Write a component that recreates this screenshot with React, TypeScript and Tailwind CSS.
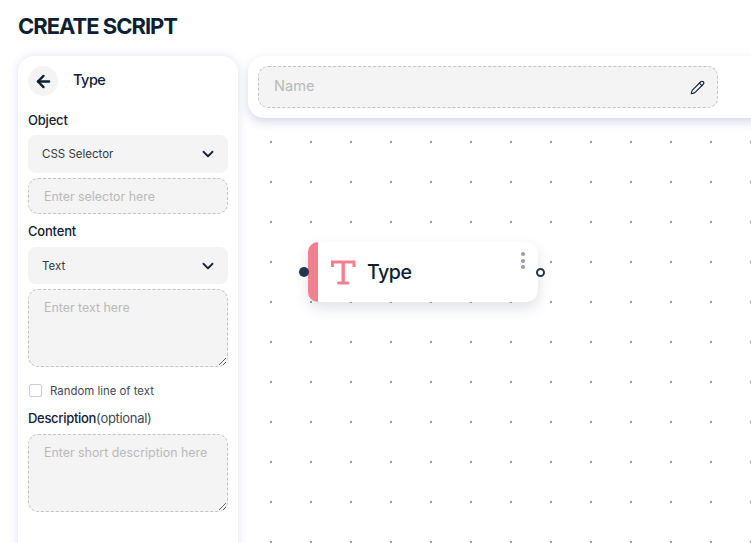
import { ArrowLeft, ChevronDown, Pencil } from "lucide-react";

function SelectBox({ label, className }: { label: string; className: string }) {
  return (
    <div className={`flex items-center justify-between rounded-lg bg-[#f4f4f4] pl-[14px] pr-[11px] ${className}`}>
      <span className="mt-[2px] text-[11.5px] text-[#333b45]">{label}</span>
      <ChevronDown size={18} strokeWidth={2.5} className="text-[#14263c]" />
    </div>
  );
}

function Area({ placeholder, className }: { placeholder: string; className: string }) {
  return (
    <textarea
      readOnly
      placeholder={placeholder}
      className={`block h-[78px] w-full rounded-[10px] border border-dashed border-[#c4c4c4] bg-[#f4f4f4] py-[9px] pl-[15px] pr-[4px] text-[12.4px] leading-[17px] outline-none placeholder:text-[#b9b9b9] ${className}`}
    />
  );
}

export default function App() {
  return (
    <div className="h-[543px] w-[751px] overflow-hidden bg-white font-['Inter',sans-serif] text-[#0f2136]">
      <h1 className="pl-[18px] pt-[12px] text-[22px] font-bold leading-[28px] tracking-[-1px] text-[#0c1f35]">CREATE SCRIPT</h1>
      <div className="mt-[16px] flex items-start">
        <aside className="ml-[18px] h-[500px] w-[220px] shrink-0 rounded-t-[16px] bg-white px-[10px] pt-[10px] shadow-[0_0_10px_rgba(100,110,180,0.2)]">
          <div className="flex items-center">
            <div className="flex h-[30px] w-[30px] items-center justify-center rounded-full bg-[#f4f4f4]">
              <ArrowLeft size={19} strokeWidth={3} className="text-[#0c1f35]" />
            </div>
            <span className="ml-[15px] -mt-[2px] text-[14.5px] font-medium tracking-[-0.5px]">Type</span>
          </div>
          <div className="mt-[15px] text-[13px] font-medium leading-[18px] tracking-[-0.2px]">Object</div>
          <SelectBox label="CSS Selector" className="mt-[6px] h-[38px]" />
          <input
            readOnly
            placeholder="Enter selector here"
            className="mt-[5px] block h-[36px] w-full rounded-[10px] border border-dashed border-[#c4c4c4] bg-[#f4f4f4] px-[15px] text-[12.4px] outline-none placeholder:text-[#b9b9b9]"
          />
          <div className="mt-[8px] text-[13px] font-medium leading-[18px] tracking-[-0.2px]">Content</div>
          <SelectBox label="Text" className="mt-[7px] h-[37px]" />
          <Area placeholder="Enter text here" className="mt-[5px]" />
          <label className="mt-[16px] flex h-[14px] items-center">
            <span className="ml-[1px] h-[13px] w-[13px] rounded-[2px] border border-[#c9ccd2] bg-white" />
            <span className="ml-[8px] mt-[4px] text-[11.4px] text-[#3f4a58]">Random line of text</span>
          </label>
          <div className="mt-[12px] text-[13px] leading-[18px] tracking-[-0.3px]">
            <span className="font-medium">Description</span>
            <span className="text-[#3f4a58]">(optional)</span>
          </div>
          <Area placeholder="Enter short description here" className="mt-[7px]" />
        </aside>
        <main className="ml-[2px] min-w-0 flex-1">
          <div className="-mr-[20px] ml-[8px] flex h-[62px] items-center rounded-[16px] bg-white px-[10px] shadow-[0_4px_10px_rgba(90,100,170,0.25)]">
            <div className="flex h-[42px] w-[460px] items-center justify-between rounded-[10px] border border-dashed border-[#c4c4c4] bg-[#f4f4f4] pl-[15px] pr-[12px]">
              <span className="text-[14.6px] text-[#b9b9b9]">Name</span>
              <Pencil size={15} strokeWidth={1.8} className="text-[#14263c]" />
            </div>
          </div>
          <div className="relative h-[425px] bg-[radial-gradient(circle,#9a9a9a_1px,transparent_1.2px)] bg-[size:40px_40px] bg-[position:11px_4px]">
            <div className="absolute left-[68px] top-[124px] flex h-[60px] w-[230px] items-center rounded-[12px] bg-white shadow-[0_6px_14px_rgba(60,70,110,0.16)]">
              <span className="h-full w-[10px] shrink-0 rounded-l-[12px] bg-[#f47f8f]" />
              <svg width="26" height="26" viewBox="0 0 26 26" className="ml-[12px] shrink-0" fill="none" stroke="#f47f8f" strokeWidth="3">
                <path d="M2.5 8V3H24V8" />
                <path d="M13.2 3V24" strokeWidth="3.4" />
                <path d="M8.5 24H18" strokeWidth="3" strokeLinecap="round" />
              </svg>
              <span className="ml-[11px] mt-[2px] text-[19.6px] font-medium tracking-[-0.5px] text-[#0c1f35]">Type</span>
              <div className="absolute right-[13px] top-[10px] flex flex-col gap-[2.5px]">
                <span className="h-[4px] w-[4px] rounded-full bg-[#9b98a4]" />
                <span className="h-[4px] w-[4px] rounded-full bg-[#9b98a4]" />
                <span className="h-[4px] w-[4px] rounded-full bg-[#9b98a4]" />
              </div>
              <span className="absolute -left-[9px] top-[25px] h-[10px] w-[10px] rounded-full bg-[#23364d]" />
              <span className="absolute -right-[7px] top-[26px] h-[9px] w-[9px] rounded-full border-2 border-[#23364d] bg-white" />
            </div>
          </div>
        </main>
      </div>
    </div>
  );
}
